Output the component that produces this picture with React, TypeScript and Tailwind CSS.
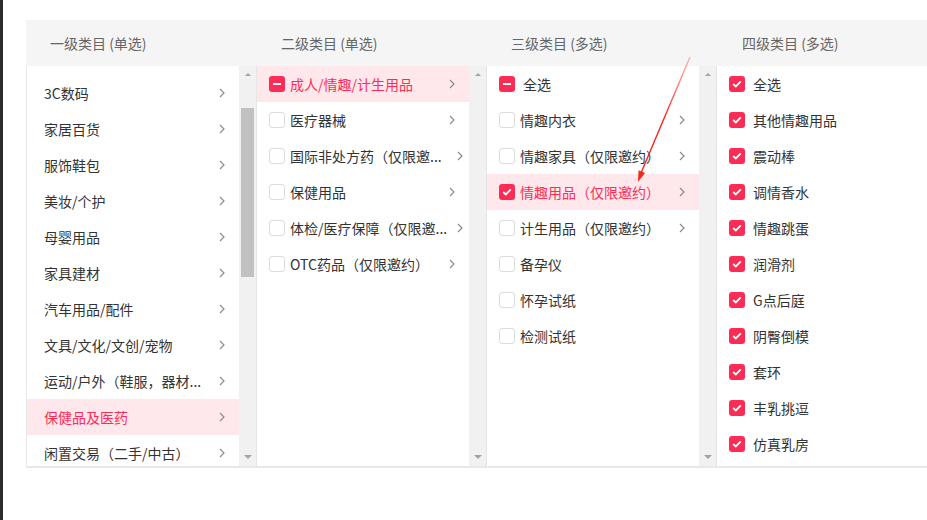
import React from 'react'

type Mark = 'none' | 'checked' | 'partial'

const levelOne = [
  '3C数码',
  '家居百货',
  '服饰鞋包',
  '美妆/个护',
  '母婴用品',
  '家具建材',
  '汽车用品/配件',
  '文具/文化/文创/宠物',
  '运动/户外（鞋服，器材...',
  '保健品及医药',
  '闲置交易（二手/中古）',
]

const levelTwo: { label: string; mark: Mark; cut?: boolean }[] = [
  { label: '成人/情趣/计生用品', mark: 'partial' },
  { label: '医疗器械', mark: 'none' },
  { label: '国际非处方药（仅限邀...', mark: 'none', cut: true },
  { label: '保健用品', mark: 'none' },
  { label: '体检/医疗保障（仅限邀...', mark: 'none', cut: true },
  { label: 'OTC药品（仅限邀约）', mark: 'none' },
]

const levelThree: { label: string; mark: Mark; more: boolean }[] = [
  { label: '情趣内衣', mark: 'none', more: true },
  { label: '情趣家具（仅限邀约）', mark: 'none', more: true },
  { label: '情趣用品（仅限邀约）', mark: 'checked', more: true },
  { label: '计生用品（仅限邀约）', mark: 'none', more: true },
  { label: '备孕仪', mark: 'none', more: false },
  { label: '怀孕试纸', mark: 'none', more: false },
  { label: '检测试纸', mark: 'none', more: false },
]

const levelFour = [
  '其他情趣用品',
  '震动棒',
  '调情香水',
  '情趣跳蛋',
  '润滑剂',
  'G点后庭',
  '阴臀倒模',
  '套环',
  '丰乳挑逗',
  '仿真乳房',
]

function Chevron({ className = '' }: { className?: string }) {
  return (
    <svg width="6" height="10" viewBox="0 0 6 10" className={className}>
      <path d="M1 1l4 4-4 4" fill="none" stroke="#8c8c8c" strokeWidth="1.2" />
    </svg>
  )
}

function Box({ mark }: { mark: Mark }) {
  if (mark === 'none') {
    return <span className="h-4 w-4 shrink-0 rounded-[3px] border border-[#dcdcdc] bg-white" />
  }
  return (
    <span className="flex h-4 w-4 shrink-0 items-center justify-center rounded-[3px] bg-[#fe2c55]">
      {mark === 'checked' ? (
        <svg width="10" height="8" viewBox="0 0 10 8">
          <path d="M1.2 4l2.6 2.4L8.8 1.4" fill="none" stroke="#fff" strokeWidth="1.8" />
        </svg>
      ) : (
        <span className="h-[2px] w-2 bg-white" />
      )}
    </span>
  )
}

// 17px track + 1px divider on the right
function Scrollbar({ thumb = false }: { thumb?: boolean }) {
  return (
    <div className="flex w-[18px] shrink-0 flex-col items-center border-r border-[#e6e6e6] bg-[#f1f1f1]">
      <span className="mt-[7px] h-0 w-0 border-x-[3px] border-b-[3px] border-x-transparent border-b-[#a3a3a3]" />
      {thumb && <span className="mt-[32px] h-[169px] w-[13px] bg-[#c1c1c1]" />}
      <span className="mb-[7px] mt-auto h-0 w-0 border-x-[4px] border-t-[4px] border-x-transparent border-t-[#a3a3a3]" />
    </div>
  )
}

export default function App() {
  return (
    <div
      className="relative flex h-[520px] w-[927px] overflow-hidden bg-white text-sm text-[#333]"
      style={{ fontFamily: '"Noto Sans CJK SC", "Noto Sans", sans-serif' }}
    >
      <div className="w-[3px] shrink-0 bg-[#2b2b2b]" />
      <div className="shrink-0 pl-[23px] pt-5">
        <div className="flex h-[46px] items-center bg-[#f5f5f5] text-[#666]">
          <div className="w-[231px] pl-6">一级类目 (单选)</div>
          <div className="w-[230px] pl-6">二级类目 (单选)</div>
          <div className="w-[230px] pl-6">三级类目 (多选)</div>
          <div className="w-[230px] pl-[25px]">四级类目 (多选)</div>
        </div>

        <div className="flex h-[402px] border-b-2 border-l border-[#e8e8e8]">
          {/* 一级 */}
          <div className="flex">
            <ul className="w-[212px] pt-[9px]">
              {levelOne.map((name) => {
                const on = name === '保健品及医药'
                return (
                  <li
                    key={name}
                    className={`flex h-9 items-center pl-[17px] pr-[14px] ${on ? 'bg-[#ffe8ec] text-[#fe2c55]' : ''}`}
                  >
                    <span className="flex-1 whitespace-nowrap">{name}</span>
                    <Chevron />
                  </li>
                )
              })}
            </ul>
            <Scrollbar thumb />
          </div>

          {/* 二级 */}
          <div className="flex">
            <ul className="w-[212px]">
              {levelTwo.map((item) => {
                const on = item.mark !== 'none'
                return (
                  <li
                    key={item.label}
                    className={`flex h-9 items-center pl-3 ${item.cut ? 'pr-[6px]' : 'pr-[14px]'} ${on ? 'bg-[#ffe8ec] text-[#fe2c55]' : ''}`}
                  >
                    <Box mark={item.mark} />
                    <span className="ml-[5px] flex-1 whitespace-nowrap">{item.label}</span>
                    <Chevron />
                  </li>
                )
              })}
            </ul>
            <Scrollbar />
          </div>

          {/* 三级 */}
          <div className="flex">
            <ul className="w-[212px]">
              <li className="flex h-9 items-center pl-3">
                <Box mark="partial" />
                <span className="ml-2">全选</span>
              </li>
              {levelThree.map((item) => {
                const on = item.mark === 'checked'
                return (
                  <li
                    key={item.label}
                    className={`flex h-9 items-center pl-3 pr-[14px] ${on ? 'bg-[#ffe8ec] text-[#fe2c55]' : ''}`}
                  >
                    <Box mark={item.mark} />
                    <span className="ml-[5px] flex-1 whitespace-nowrap">{item.label}</span>
                    {item.more && <Chevron />}
                  </li>
                )
              })}
            </ul>
            <Scrollbar />
          </div>

          {/* 四级 */}
          <div className="flex">
            <ul className="w-[212px]">
              {['全选', ...levelFour].map((name) => (
                <li key={name} className="flex h-9 items-center pl-3">
                  <Box mark="checked" />
                  <span className="ml-2 whitespace-nowrap">{name}</span>
                </li>
              ))}
            </ul>
            <Scrollbar />
          </div>
        </div>
      </div>

      <svg className="pointer-events-none absolute inset-0" width="927" height="520">
        <defs>
          <linearGradient id="arrowFade" x1="690" y1="57" x2="638" y2="181" gradientUnits="userSpaceOnUse">
            <stop offset="0" stopColor="#ff3b30" stopOpacity="0.35" />
            <stop offset="0.5" stopColor="#f5261b" />
            <stop offset="1" stopColor="#f5261b" />
          </linearGradient>
        </defs>
        <line x1="690" y1="57" x2="641" y2="173" stroke="url(#arrowFade)" strokeWidth="1.4" />
        <polygon points="638,182 645,173 638.6,170.2" fill="#f5261b" />
      </svg>
    </div>
  )
}
